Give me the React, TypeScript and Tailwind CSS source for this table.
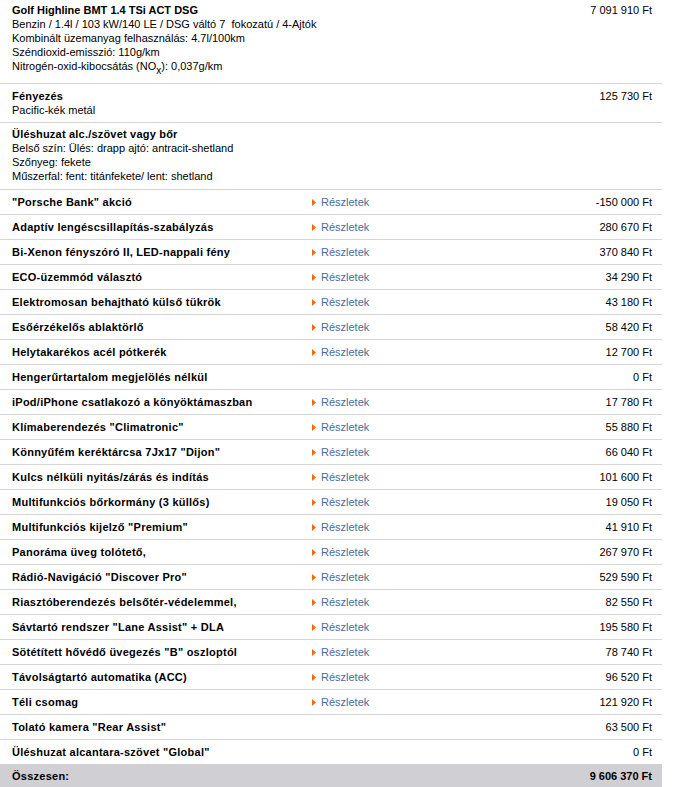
import React from "react";

type Row = { name: string; link: boolean; price: string };

const rows: Row[] = [
  { name: '"Porsche Bank" akció', link: true, price: "-150 000 Ft" },
  { name: "Adaptív lengéscsillapítás-szabályzás", link: true, price: "280 670 Ft" },
  { name: "Bi-Xenon fényszóró II, LED-nappali fény", link: true, price: "370 840 Ft" },
  { name: "ECO-üzemmód választó", link: true, price: "34 290 Ft" },
  { name: "Elektromosan behajtható külső tükrök", link: true, price: "43 180 Ft" },
  { name: "Esőérzékelős ablaktörlő", link: true, price: "58 420 Ft" },
  { name: "Helytakarékos acél pótkerék", link: true, price: "12 700 Ft" },
  { name: "Hengerűrtartalom megjelölés nélkül", link: false, price: "0 Ft" },
  { name: "iPod/iPhone csatlakozó a könyöktámaszban", link: true, price: "17 780 Ft" },
  { name: 'Klímaberendezés "Climatronic"', link: true, price: "55 880 Ft" },
  { name: 'Könnyűfém keréktárcsa 7Jx17 "Dijon"', link: true, price: "66 040 Ft" },
  { name: "Kulcs nélküli nyitás/zárás és indítás", link: true, price: "101 600 Ft" },
  { name: "Multifunkciós bőrkormány (3 küllős)", link: true, price: "19 050 Ft" },
  { name: 'Multifunkciós kijelző "Premium"', link: true, price: "41 910 Ft" },
  { name: "Panoráma üveg tolótető,", link: true, price: "267 970 Ft" },
  { name: 'Rádió-Navigáció "Discover Pro"', link: true, price: "529 590 Ft" },
  { name: "Riasztóberendezés belsőtér-védelemmel,", link: true, price: "82 550 Ft" },
  { name: 'Sávtartó rendszer "Lane Assist" + DLA', link: true, price: "195 580 Ft" },
  { name: 'Sötétített hővédő üvegezés "B" oszloptól', link: true, price: "78 740 Ft" },
  { name: "Távolságtartó automatika (ACC)", link: true, price: "96 520 Ft" },
  { name: "Téli csomag", link: true, price: "121 920 Ft" },
  { name: 'Tolató kamera "Rear Assist"', link: false, price: "63 500 Ft" },
  { name: 'Üléshuzat alcantara-szövet "Global"', link: false, price: "0 Ft" },
];

function Arrow() {
  return (
    <svg width="4" height="7" viewBox="0 0 4 7" className="mr-[5px] shrink-0">
      <polygon points="0,0 4,3.5 0,7" fill="#ff6600" />
    </svg>
  );
}

export default function App() {
  return (
    <div
      className="w-[662px] bg-white text-[11px] leading-[14px] text-[#000]"
      style={{ fontFamily: '"Liberation Sans", Arial, sans-serif' }}
    >
      {/* Model block */}
      <div className="flex h-[83px] pt-[3px] pl-[12px] pr-[10px]">
        <div className="flex-1">
          <div className="font-bold">Golf Highline BMT 1.4 TSi ACT DSG</div>
          <div>Benzin / 1.4l / 103 kW/140 LE / DSG váltó 7&nbsp; fokozatú / 4-Ajtók</div>
          <div>Kombinált üzemanyag felhasználás: 4.7l/100km</div>
          <div>Széndioxid-emisszió: 110g/km</div>
          <div>
            Nitrogén-oxid-kibocsátás (NO
            <sub className="relative top-[4px] align-baseline text-[10px] leading-none">x</sub>
            ): 0,037g/km
          </div>
        </div>
        <div className="text-right">7 091 910 Ft</div>
      </div>

      {/* Fényezés */}
      <div className="flex h-[39px] border-t border-[#d6d6d6] pt-[5px] pl-[12px] pr-[10px]">
        <div className="flex-1">
          <div className="font-bold tracking-[0.2px]">Fényezés</div>
          <div>Pacific-kék metál</div>
        </div>
        <div className="text-right">125 730 Ft</div>
      </div>

      {/* Üléshuzat */}
      <div className="flex h-[67px] border-t border-[#d6d6d6] pt-[4px] pl-[12px] pr-[10px]">
        <div className="flex-1">
          <div className="font-bold tracking-[0.2px]">Üléshuzat alc./szövet vagy bőr</div>
          <div>Belső szín: Ülés: drapp ajtó: antracit-shetland</div>
          <div>Szőnyeg: fekete</div>
          <div>Műszerfal: fent: titánfekete/ lent: shetland</div>
        </div>
      </div>

      {rows.map((r) => (
        <div
          key={r.name}
          className="flex h-[25px] items-center border-t border-[#d6d6d6] pl-[12px] pr-[10px]"
        >
          <div className="w-[300px] font-bold tracking-[0.25px]">{r.name}</div>
          <div className="flex w-[120px] items-center">
            {r.link && (
              <>
                <Arrow />
                <span className="text-[#4a6b97]">Részletek</span>
              </>
            )}
          </div>
          <div className="flex-1 text-right">{r.price}</div>
        </div>
      ))}

      <div className="flex h-[24px] items-center bg-[#cfcfd4] pl-[12px] pr-[10px] font-bold">
        <div className="flex-1 tracking-[0.25px]">Összesen:</div>
        <div className="text-right">9 606 370 Ft</div>
      </div>
    </div>
  );
}
